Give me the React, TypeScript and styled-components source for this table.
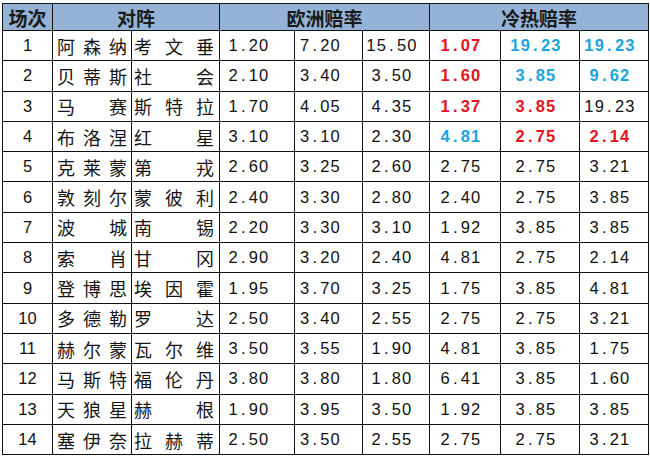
import React from "react";
import styled, { createGlobalStyle } from "styled-components";

const Global = createGlobalStyle`
  html, body { margin: 0; padding: 0; background: #ffffff; }
  body { font-family: "Liberation Sans", "Noto Sans CJK SC", sans-serif; }
`;

const Page = styled.div`
  padding: 3px 0 0 2px;
  width: 650px;
  height: 457px;
  box-sizing: border-box;
  background: #ffffff;
`;

const Table = styled.table`
  border-collapse: collapse;
  table-layout: fixed;
  width: 646px;
  border: 1.5px solid #000;
`;

const HeadRow = styled.tr`
  height: 27px;
  background: #95b3d7;
`;

const Th = styled.th`
  border: 1px solid #111;
  padding: 0;
  font-family: "Noto Sans CJK SC", sans-serif;
  font-weight: 700;
  font-size: 19px;
  line-height: 25px;
  color: #1a1a1a;
  text-align: center;
`;

const Row = styled.tr`
  height: 30.3px;
`;

const NumCell = styled.td`
  border: 1px solid #111;
  padding: 0;
  text-align: center;
  font-family: "Liberation Sans", sans-serif;
  font-size: 16.5px;
  color: #111;
`;

const NameCell = styled.td<{ $pl: number; $pr: number }>`
  border: 1px solid #111;
  padding: 0 ${(p) => p.$pr}px 0 ${(p) => p.$pl}px;
`;

const Name = styled.div`
  display: flex;
  justify-content: space-between;
  font-family: "Noto Sans CJK SC", sans-serif;
  font-size: 18px;
  line-height: 28px;
  color: #151515;
`;

const OddsCell = styled.td<{ $tone?: "red" | "blue"; $shift: number }>`
  border: 1px solid #111;
  padding: 0 ${(p) => p.$shift}px 0 0;
  text-align: center;
  font-family: "Liberation Sans", sans-serif;
  font-size: 16.5px;
  letter-spacing: 1.2px;
  font-weight: ${(p) => (p.$tone ? 700 : 400)};
  color: ${(p) =>
    p.$tone === "red" ? "#e3141d" : p.$tone === "blue" ? "#1ba4e0" : "#111"};
`;

const Dot = styled.span`
  margin: 0 2px;
`;

type Tone = "red" | "blue" | undefined;
type Match = {
  no: number;
  home: string;
  away: string;
  eu: [string, string, string];
  hot: [string, string, string];
  tones: [Tone, Tone, Tone];
};

const N: [Tone, Tone, Tone] = [undefined, undefined, undefined];

const matches: Match[] = [
  { no: 1, home: "阿森纳", away: "考文垂", eu: ["1.20", "7.20", "15.50"], hot: ["1.07", "19.23", "19.23"], tones: ["red", "blue", "blue"] },
  { no: 2, home: "贝蒂斯", away: "社会", eu: ["2.10", "3.40", "3.50"], hot: ["1.60", "3.85", "9.62"], tones: ["red", "blue", "blue"] },
  { no: 3, home: "马赛", away: "斯特拉", eu: ["1.70", "4.05", "4.35"], hot: ["1.37", "3.85", "19.23"], tones: ["red", "red", undefined] },
  { no: 4, home: "布洛涅", away: "红星", eu: ["3.10", "3.10", "2.30"], hot: ["4.81", "2.75", "2.14"], tones: ["blue", "red", "red"] },
  { no: 5, home: "克莱蒙", away: "第戎", eu: ["2.60", "3.25", "2.60"], hot: ["2.75", "2.75", "3.21"], tones: N },
  { no: 6, home: "敦刻尔", away: "蒙彼利", eu: ["2.40", "3.30", "2.80"], hot: ["2.40", "2.75", "3.85"], tones: N },
  { no: 7, home: "波城", away: "南锡", eu: ["2.20", "3.30", "3.10"], hot: ["1.92", "3.85", "3.85"], tones: N },
  { no: 8, home: "索肖", away: "甘冈", eu: ["2.90", "3.20", "2.40"], hot: ["4.81", "2.75", "2.14"], tones: N },
  { no: 9, home: "登博思", away: "埃因霍", eu: ["1.95", "3.70", "3.25"], hot: ["1.75", "3.85", "4.81"], tones: N },
  { no: 10, home: "多德勒", away: "罗达", eu: ["2.50", "3.40", "2.55"], hot: ["2.75", "2.75", "3.21"], tones: N },
  { no: 11, home: "赫尔蒙", away: "瓦尔维", eu: ["3.50", "3.55", "1.90"], hot: ["4.81", "3.85", "1.75"], tones: N },
  { no: 12, home: "马斯特", away: "福伦丹", eu: ["3.80", "3.80", "1.80"], hot: ["6.41", "3.85", "1.60"], tones: N },
  { no: 13, home: "天狼星", away: "赫根", eu: ["1.90", "3.95", "3.50"], hot: ["1.92", "3.85", "3.85"], tones: N },
  { no: 14, home: "塞伊奈", away: "拉赫蒂", eu: ["2.50", "3.50", "2.55"], hot: ["2.75", "2.75", "3.21"], tones: N },
];

const widths = [50, 79, 88, 75, 68, 67, 71, 79, 69];
const euShift = [16, 16, 8];
const hotShift = [8, 8, 8];

const Chars: React.FC<{ text: string }> = ({ text }) => (
  <Name>
    {Array.from(text).map((c, i) => (
      <span key={i}>{c}</span>
    ))}
  </Name>
);

const Odds: React.FC<{ value: string }> = ({ value }) => {
  const [a, b] = value.split(".");
  return (
    <>
      {a}
      <Dot>.</Dot>
      {b}
    </>
  );
};

export default function App() {
  return (
    <Page>
      <Global />
      <Table>
        <colgroup>
          {widths.map((w, i) => (
            <col key={i} style={{ width: w }} />
          ))}
        </colgroup>
        <thead>
          <HeadRow>
            <Th>场次</Th>
            <Th colSpan={2}>对阵</Th>
            <Th colSpan={3}>欧洲赔率</Th>
            <Th colSpan={3}>冷热赔率</Th>
          </HeadRow>
        </thead>
        <tbody>
          {matches.map((m) => (
            <Row key={m.no}>
              <NumCell>{m.no}</NumCell>
              <NameCell $pl={4} $pr={4}>
                <Chars text={m.home} />
              </NameCell>
              <NameCell $pl={2} $pr={5}>
                <Chars text={m.away} />
              </NameCell>
              {m.eu.map((v, i) => (
                <OddsCell key={"e" + i} $shift={euShift[i]}>
                  <Odds value={v} />
                </OddsCell>
              ))}
              {m.hot.map((v, i) => (
                <OddsCell key={"h" + i} $tone={m.tones[i]} $shift={hotShift[i]}>
                  <Odds value={v} />
                </OddsCell>
              ))}
            </Row>
          ))}
        </tbody>
      </Table>
    </Page>
  );
}
